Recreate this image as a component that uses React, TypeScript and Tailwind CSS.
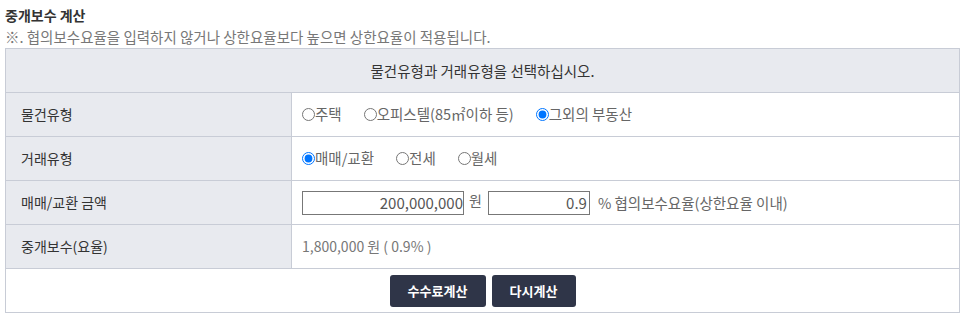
import React, { useState } from 'react';

const font = { fontFamily: '"Noto Sans CJK KR", "Noto Sans", sans-serif' };

function Radio({ name, label, checked, onChange }: { name: string; label: string; checked: boolean; onChange: () => void }) {
  return (
    <label className="inline-flex items-center mr-[22px] text-[14.5px] text-[#666] cursor-pointer">
      <input type="radio" name={name} checked={checked} onChange={onChange} className="m-0 w-[13px] h-[13px]" />
      <span>{label}</span>
    </label>
  );
}

export default function App() {
  const [prop, setProp] = useState('etc');
  const [deal, setDeal] = useState('sale');
  const [amount, setAmount] = useState('200,000,000');
  const [rate, setRate] = useState('0.9');

  const labelCell = 'w-[286px] bg-[#e8eaef] border border-[#c8ccd6] px-[15px] text-left font-normal text-[14px] text-[#333]';
  const valueCell = 'border border-[#c8ccd6] pl-[10px] text-[14px]';

  return (
    <div className="w-[964px] h-[328px] bg-white px-[5px] pt-[5px]" style={font}>
      <h2 className="text-[14px] font-bold text-[#333] leading-[20px]">중개보수 계산</h2>
      <p className="text-[14.5px] text-[#777] leading-[20px] mt-[2px]">※. 협의보수요율을 입력하지 않거나 상한요율보다 높으면 상한요율이 적용됩니다.</p>
      <table className="w-[955px] mt-[1px] border-collapse">
        <tbody>
          <tr className="h-[44px]">
            <th colSpan={2} className="bg-[#e8eaef] border border-[#c8ccd6] text-center font-normal text-[14.5px] text-[#333]">
              물건유형과 거래유형을 선택하십시오.
            </th>
          </tr>
          <tr className="h-[44px]">
            <th className={labelCell}>물건유형</th>
            <td className={valueCell}>
              <Radio name="prop" label="주택" checked={prop === 'house'} onChange={() => setProp('house')} />
              <Radio name="prop" label="오피스텔(85㎡이하 등)" checked={prop === 'office'} onChange={() => setProp('office')} />
              <Radio name="prop" label="그외의 부동산" checked={prop === 'etc'} onChange={() => setProp('etc')} />
            </td>
          </tr>
          <tr className="h-[44px]">
            <th className={labelCell}>거래유형</th>
            <td className={valueCell}>
              <Radio name="deal" label="매매/교환" checked={deal === 'sale'} onChange={() => setDeal('sale')} />
              <Radio name="deal" label="전세" checked={deal === 'jeonse'} onChange={() => setDeal('jeonse')} />
              <Radio name="deal" label="월세" checked={deal === 'monthly'} onChange={() => setDeal('monthly')} />
            </td>
          </tr>
          <tr className="h-[44px]">
            <th className={labelCell}>매매/교환 금액</th>
            <td className={valueCell}>
              <div className="flex items-center text-[#666]">
                <input
                  value={amount}
                  onChange={e => setAmount(e.target.value)}
                  className="w-[162px] h-[24px] border border-[#777] text-right text-[15px] text-[#555] outline-none"
                />
                <span className="ml-[5px] mr-[6px] -mt-[4px]">원</span>
                <input
                  value={rate}
                  onChange={e => setRate(e.target.value)}
                  className="w-[102px] h-[24px] border border-[#777] text-right text-[15px] text-[#555] outline-none pr-[2px]"
                />
                <span className="ml-[8px] text-[14.5px]">% 협의보수요율(상한요율 이내)</span>
              </div>
            </td>
          </tr>
          <tr className="h-[44px]">
            <th className={labelCell}>중개보수(요율)</th>
            <td className={`${valueCell} text-[#777]`}>1,800,000 원 ( 0.9% )</td>
          </tr>
          <tr className="h-[44px]">
            <td colSpan={2} className="border border-[#c8ccd6] text-center">
              <div className="flex justify-center gap-[6px]">
                <button className="w-[96px] h-[32px] rounded-[3px] bg-[#2f3548] text-white text-[13px] font-bold">수수료계산</button>
                <button className="w-[84px] h-[32px] rounded-[3px] bg-[#2f3548] text-white text-[13px] font-bold">다시계산</button>
              </div>
            </td>
          </tr>
        </tbody>
      </table>
    </div>
  );
}
